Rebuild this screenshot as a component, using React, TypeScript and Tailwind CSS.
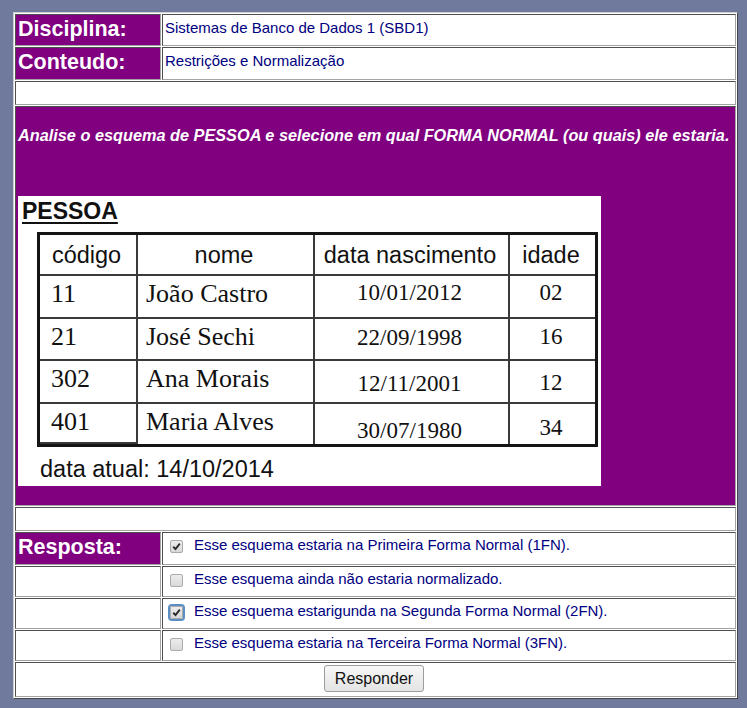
import React from "react";

const cell =
  "border border-t-[#4f4f4f] border-l-[#4f4f4f] border-b-[#a3a3a3] border-r-[#a3a3a3]";
const label = `${cell} w-[146px] shrink-0 bg-[#800080] pl-[2px] pt-[2px] text-[21.5px] leading-[24px] font-bold text-white`;
const value = `${cell} flex-1 bg-white pl-[2px] pt-[4px] text-[15px] leading-[17px] text-[#000080]`;

const rows = [
  { code: "11", name: "João Castro", date: "10/01/2012", age: "02", dt: 4, at: 4 },
  { code: "21", name: "José Sechi", date: "22/09/1998", age: "16", dt: 6, at: 5 },
  { code: "302", name: "Ana Morais", date: "12/11/2001", age: "12", dt: 10, at: 9 },
  { code: "401", name: "Maria Alves", date: "30/07/1980", age: "34", dt: 14, at: 11 },
];

const options = [
  { text: "Esse esquema estaria na Primeira Forma Normal (1FN).", checked: true, focus: false, label: "Resposta:", h: "h-[33px]" },
  { text: "Esse esquema ainda não estaria normalizado.", checked: false, focus: false, label: "", h: "h-[31px]" },
  { text: "Esse esquema estarigunda na Segunda Forma Normal (2FN).", checked: true, focus: true, label: "", h: "h-[31px]" },
  { text: "Esse esquema estaria na Terceira Forma Normal (3FN).", checked: false, focus: false, label: "", h: "h-[31px]" },
];

function Check({ checked, focus }: { checked: boolean; focus: boolean }) {
  return (
    <span
      className={`mt-[4px] flex h-[13px] w-[13px] shrink-0 items-center justify-center rounded-[2px] border border-[#ababab] bg-linear-to-b from-[#ececec] to-[#d9d9d9] ${
        focus ? "shadow-[0_0_0_2px_#5b8fc4]" : ""
      }`}
    >
      {checked && (
        <svg width="9" height="9" viewBox="0 0 9 9">
          <path d="M1.2 4.8 L3.5 7 L7.8 1.6" fill="none" stroke="#2b2b2b" strokeWidth="1.9" />
        </svg>
      )}
    </span>
  );
}

function Schema() {
  const grid = "grid grid-cols-[96px_175px_193px_85px] gap-[2px]";
  return (
    <div className="mt-[52px] h-[290px] w-[583px] bg-white text-[#111]">
      <div className="pl-[4px] pt-[2px] text-[23px] leading-[26px] font-bold underline decoration-[2px] underline-offset-[3px]">
        PESSOA
      </div>
      <div className="ml-[19px] mt-[8px] w-[561px] border-[3px] border-[#151515] bg-[#3a3a3a]">
        <div className={`${grid} gap-y-[2px]`}>
          {["código", "nome", "data nascimento", "idade"].map((h) => (
            <div key={h} className="flex h-[39px] items-center justify-center bg-white pr-[3px] text-[23.5px] leading-[28px]">
              {h}
            </div>
          ))}
          {rows.map((r, i) => (
            <React.Fragment key={r.code}>
              <div
                className={`${i === 3 ? "h-[38px]" : i % 2 === 0 ? "h-[41px]" : "h-[40px]"} bg-white pl-[11px] pt-[3px] font-['Liberation_Serif',serif] text-[26px] leading-[30px]`}
              >
                {r.code}
              </div>
              <div className="bg-white pl-[8px] pt-[3px] font-['Liberation_Serif',serif] text-[26px] leading-[30px]">
                {r.name}
              </div>
              <div
                className="bg-white pr-[4px] text-center font-['Liberation_Serif',serif] text-[23px] leading-[26px]"
                style={{ paddingTop: r.dt }}
              >
                {r.date}
              </div>
              <div
                className="bg-white pr-[3px] text-center font-['Liberation_Serif',serif] text-[23px] leading-[26px]"
                style={{ paddingTop: r.at }}
              >
                {r.age}
              </div>
            </React.Fragment>
          ))}
        </div>
      </div>
      <div className="pl-[22px] pt-[9px] text-[23.5px] leading-[27px]">data atual: 14/10/2014</div>
    </div>
  );
}

export default function App() {
  return (
    <div className="min-h-[708px] bg-[#6f7a9d] pl-[13px] pt-[12px] font-['Liberation_Sans',Arial,sans-serif]">
      <div className="flex w-[725px] flex-col gap-px border border-t-[#cfcfcf] border-l-[#cfcfcf] border-b-[#444] border-r-[#444] bg-white p-px">
        <div className="flex h-[32px] gap-px">
          <div className={label}>Disciplina:</div>
          <div className={value}>Sistemas de Banco de Dados 1 (SBD1)</div>
        </div>
        <div className="flex h-[33px] gap-px">
          <div className={label}>Conteudo:</div>
          <div className={value}>Restrições e Normalização</div>
        </div>
        <div className={`${cell} h-[24px] bg-white`} />
        <div className={`${cell} h-[400px] bg-[#800080] pl-[2px] pt-[19px]`}>
          <div className="whitespace-nowrap text-[16.3px] leading-[18px] font-bold italic text-white">
            Analise o esquema de PESSOA e selecione em qual FORMA NORMAL (ou quais) ele estaria.
          </div>
          <Schema />
        </div>
        <div className={`${cell} h-[24px] bg-white`} />
        {options.map((o) => (
          <div key={o.text} className={`flex ${o.h} gap-px`}>
            <div className={o.label ? label : `${cell} w-[146px] shrink-0 bg-white`}>{o.label}</div>
            <div className={`${cell} flex flex-1 items-start bg-white pl-[7px] pt-[3px]`}>
              <Check checked={o.checked} focus={o.focus} />
              <span className="ml-[11px] text-[15px] leading-[17px] text-[#000080]">{o.text}</span>
            </div>
          </div>
        ))}
        <div className={`${cell} flex h-[35px] justify-center bg-white pr-[3px] pt-[2px]`}>
          <button className="h-[27px] w-[100px] rounded-[3px] border border-[#9c9c9c] bg-linear-to-b from-[#f7f7f7] to-[#e4e4e4] text-[16px] leading-[18px] text-[#111]">
            Responder
          </button>
        </div>
      </div>
    </div>
  );
}
